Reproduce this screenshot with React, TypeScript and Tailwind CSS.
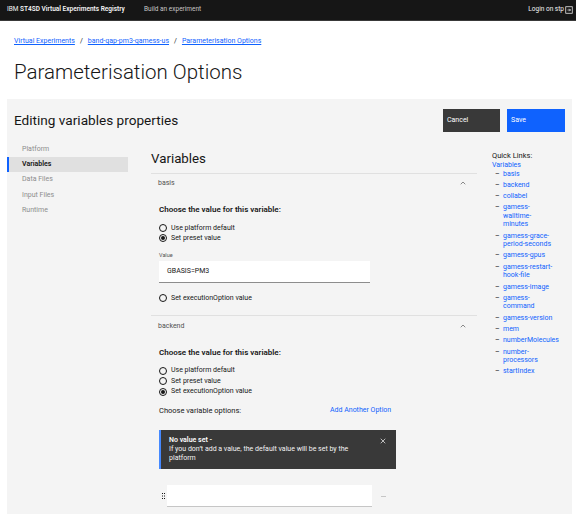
import { ChevronUp, X } from "lucide-react";

const navItems = ["Platform", "Variables", "Data Files", "Input Files", "Runtime"];

const quickLinks = [
  "basis",
  "backend",
  "collabel",
  "gamess-walltime-minutes",
  "gamess-grace-period-seconds",
  "gamess-gpus",
  "gamess-restart-hook-file",
  "gamess-image",
  "gamess-command",
  "gamess-version",
  "mem",
  "numberMolecules",
  "number-processors",
  "startIndex",
];

function Radio({ checked, label }: { checked?: boolean; label: string }) {
  return (
    <div className="flex h-[10.5px] items-center gap-[4px]">
      <span className="flex h-[8px] w-[8px] items-center justify-center rounded-full border border-[#161616]">
        {checked && <span className="h-[4px] w-[4px] rounded-full bg-[#161616]" />}
      </span>
      <span className="text-[7px] text-[#161616]">{label}</span>
    </div>
  );
}

function AccordionHeader({ title }: { title: string }) {
  return (
    <div className="flex h-[20px] items-center justify-between border-t border-[#e0e0e0] pl-[7px] pr-[10px]">
      <span className="text-[7px] text-[#525252]">{title}</span>
      <ChevronUp className="h-[8px] w-[8px] text-[#525252]" strokeWidth={2} />
    </div>
  );
}

export default function App() {
  return (
    <div className="min-h-[514px] bg-white text-[#161616]" style={{ fontFamily: "Roboto, sans-serif" }}>
      {/* Header */}
      <header className="flex h-[21px] items-center border-b border-[#393939] bg-[#161616] pl-[7px] pr-[3px] text-[6.5px] text-[#f4f4f4]">
        <span className="w-[137px]">
          IBM <span className="font-semibold">ST4SD Virtual Experiments Registry</span>
        </span>
        <span className="text-[#c6c6c6]">Build an experiment</span>
        <span className="ml-auto flex items-center gap-[1px]">
          Login on stp
          <svg width="8" height="8" viewBox="0 0 16 16" fill="none" stroke="#f4f4f4" strokeWidth="1.5">
            <rect x="1.5" y="1.5" width="13" height="13" />
            <path d="M5 8h6M8.5 5.5L11 8l-2.5 2.5" />
          </svg>
        </span>
      </header>

      {/* Breadcrumb + title */}
      <div className="px-[14px] pt-[15px]">
        <nav className="flex items-center gap-[5px] text-[7px] text-[#0f62fe]">
          <a className="underline">Virtual Experiments</a>
          <span className="text-[#161616]">/</span>
          <a className="underline">band-gap-pm3-gamess-us</a>
          <span className="text-[#161616]">/</span>
          <a className="underline">Parameterisation Options</a>
        </nav>
        <h1 className="mt-[12px] text-[20.5px] font-light leading-[27px] text-[#161616]">
          Parameterisation Options
        </h1>
      </div>

      {/* Panel */}
      <div className="ml-[7px] mr-[4px] mt-[13px] bg-[#f4f4f4] pb-[10px]">
        <div className="flex items-start justify-between pl-[7px] pr-[7px] pt-[10px]">
          <h2 className="pt-[1px] text-[13.6px] leading-[20px] text-[#161616]">Editing variables properties</h2>
          <div className="flex gap-[7px]">
            <button className="h-[23px] w-[57px] bg-[#393939] pl-[4px] text-left text-[7px] text-white">Cancel</button>
            <button className="h-[23px] w-[58px] bg-[#0f62fe] pl-[4px] text-left text-[7px] text-white">Save</button>
          </div>
        </div>

        <div className="mt-[7px] flex">
          {/* Sidebar */}
          <aside className="w-[121px] shrink-0 pt-[3px]">
            {navItems.map((item) => {
              const active = item === "Variables";
              return (
                <div
                  key={item}
                  className={`flex h-[15.3px] items-center border-l-2 pl-[13px] text-[7px] ${
                    active
                      ? "border-[#0f62fe] bg-[#e0e0e0] font-semibold text-[#161616]"
                      : "border-transparent text-[#8d8d8d]"
                  }`}
                >
                  {item}
                </div>
              );
            })}
          </aside>

          {/* Main content */}
          <main className="ml-[23px] w-[326px] shrink-0 pt-[11px]">
            <h3 className="text-[13.3px] leading-[18px] text-[#161616]">Variables</h3>
            <div className="mt-[5px]">
              <AccordionHeader title="basis" />
              <div className="pb-[12px] pl-[8px] pt-[12px]">
                <p className="text-[8px] font-semibold leading-[10px]">Choose the value for this variable:</p>
                <div className="mt-[8px]">
                  <Radio label="Use platform default" />
                  <Radio label="Set preset value" checked />
                </div>
                <p className="mt-[7px] text-[5.5px] text-[#525252]">Value</p>
                <div className="mt-[2px] flex h-[22px] w-[211px] items-center border-b border-[#8d8d8d] bg-white pl-[8px] text-[7px]">
                  GBASIS=PM3
                </div>
                <div className="mt-[10px]">
                  <Radio label="Set executionOption value" />
                </div>
              </div>

              <AccordionHeader title="backend" />
              <div className="pl-[8px] pt-[13px]">
                <p className="text-[8px] font-semibold leading-[10px]">Choose the value for this variable:</p>
                <div className="mt-[7px]">
                  <Radio label="Use platform default" />
                  <Radio label="Set preset value" />
                  <Radio label="Set executionOption value" checked />
                </div>
                <div className="mt-[8px] flex items-center">
                  <span className="w-[171px] text-[7.5px] text-[#161616]">Choose variable options:</span>
                  <a className="text-[7px] text-[#0f62fe]">Add Another Option</a>
                </div>

                <div className="mt-[14px] flex w-[237px] items-start justify-between border-l-2 border-[#4589ff] bg-[#393939] py-[6px] pl-[8px] pr-[9px] text-[7px] leading-[9px] text-white">
                  <div className="w-[190px]">
                    <p className="font-semibold">No value set -</p>
                    <p className="text-[#f4f4f4]">If you don’t add a value, the default value will be set by the platform</p>
                  </div>
                  <X className="mt-[1px] h-[8px] w-[8px] shrink-0" strokeWidth={2} />
                </div>

                <div className="mt-[16px] flex items-center">
                  <svg width="8" height="6" viewBox="0 0 8 6" className="shrink-0" fill="#161616">
                    <rect x="3" y="0" width="1" height="1" />
                    <rect x="5" y="0" width="1" height="1" />
                    <rect x="3" y="2.5" width="1" height="1" />
                    <rect x="5" y="2.5" width="1" height="1" />
                    <rect x="3" y="5" width="1" height="1" />
                    <rect x="5" y="5" width="1" height="1" />
                  </svg>
                  <div className="h-[22px] w-[205px] border-b border-[#c6c6c6] bg-white" />
                  <span className="ml-[9px] h-[1px] w-[5px] bg-[#c6c6c6]" />
                </div>
              </div>
            </div>
          </main>

          {/* Quick links */}
          <aside className="ml-[15px] pt-[12px] text-[7px]">
            <p className="text-[7.5px] leading-[9px] text-[#161616]">Quick Links:</p>
            <a className="block leading-[10px] text-[#0f62fe]">Variables</a>
            <ul className="ml-[3px] flex flex-col gap-[2.8px]">
              {quickLinks.map((l) => (
                <li key={l} className="flex leading-[8.5px]">
                  <span className="w-[8px] shrink-0 text-[#161616]">–</span>
                  <a className="w-[52px] text-[#0f62fe]">{l}</a>
                </li>
              ))}
            </ul>
          </aside>
        </div>
      </div>
    </div>
  );
}
